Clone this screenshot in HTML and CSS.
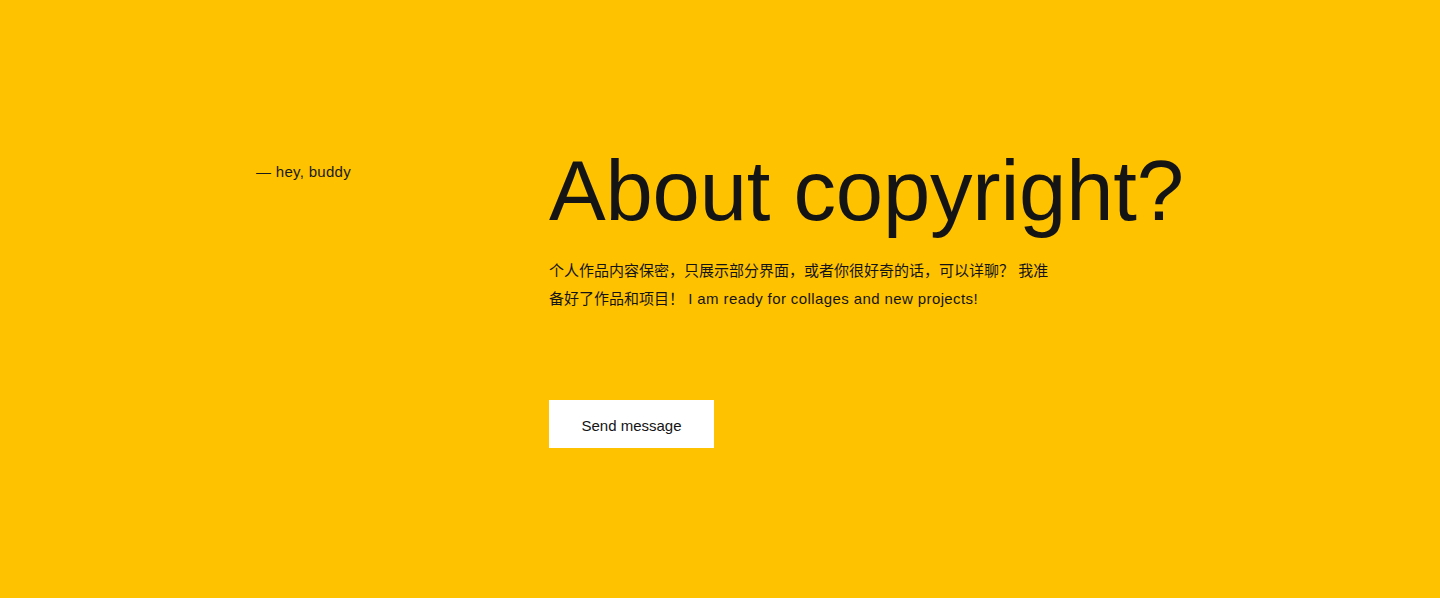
FILE: index.html
```html
<!DOCTYPE html>
<html lang="zh">
<head>
<meta charset="utf-8">
<link rel="stylesheet" href="styles.css">
</head>
<body>
<section class="about">
  <div class="side">— hey, buddy</div>
  <div class="main">
    <h1 class="title">About copyright?</h1>
    <p class="desc">个人作品内容保密，只展示部分界面，或者你很好奇的话，可以详聊？ 我准备好了作品和项目！ <span class="en">I am ready for collages and new projects!</span></p>
    <a class="btn" href="#">Send message</a>
  </div>
</section>
</body>
</html>
```

FILE: styles.css
```css
html, body {
  margin: 0;
  padding: 0;
}
body {
  background: #ffc200;
  color: #141414;
  font-family: "Liberation Sans", "Noto Sans CJK SC", sans-serif;
  height: 598px;
  overflow: hidden;
}
.about {
  display: flex;
  padding: 141px 0 0 256px;
}
.side {
  width: 293px;
  font-size: 15px;
  line-height: 20px;
  padding-top: 21px;
  letter-spacing: 0.3px;
  color: #1a1a1a;
}
.main {
  display: flex;
  flex-direction: column;
  align-items: flex-start;
}
.title {
  margin: 0;
  font-weight: 400;
  font-size: 85px;
  line-height: 100px;
  letter-spacing: -0.2px;
}
.desc {
  margin: 16px 0 0;
  width: 506px;
  font-size: 15px;
  line-height: 28px;
}
.en {
  letter-spacing: 0.4px;
}
.btn {
  margin-top: 87px;
  display: flex;
  align-items: center;
  justify-content: center;
  box-sizing: border-box;
  width: 165px;
  height: 48px;
  padding-top: 3px;
  background: #fff;
  color: #141414;
  text-decoration: none;
  font-size: 15px;
}
```
